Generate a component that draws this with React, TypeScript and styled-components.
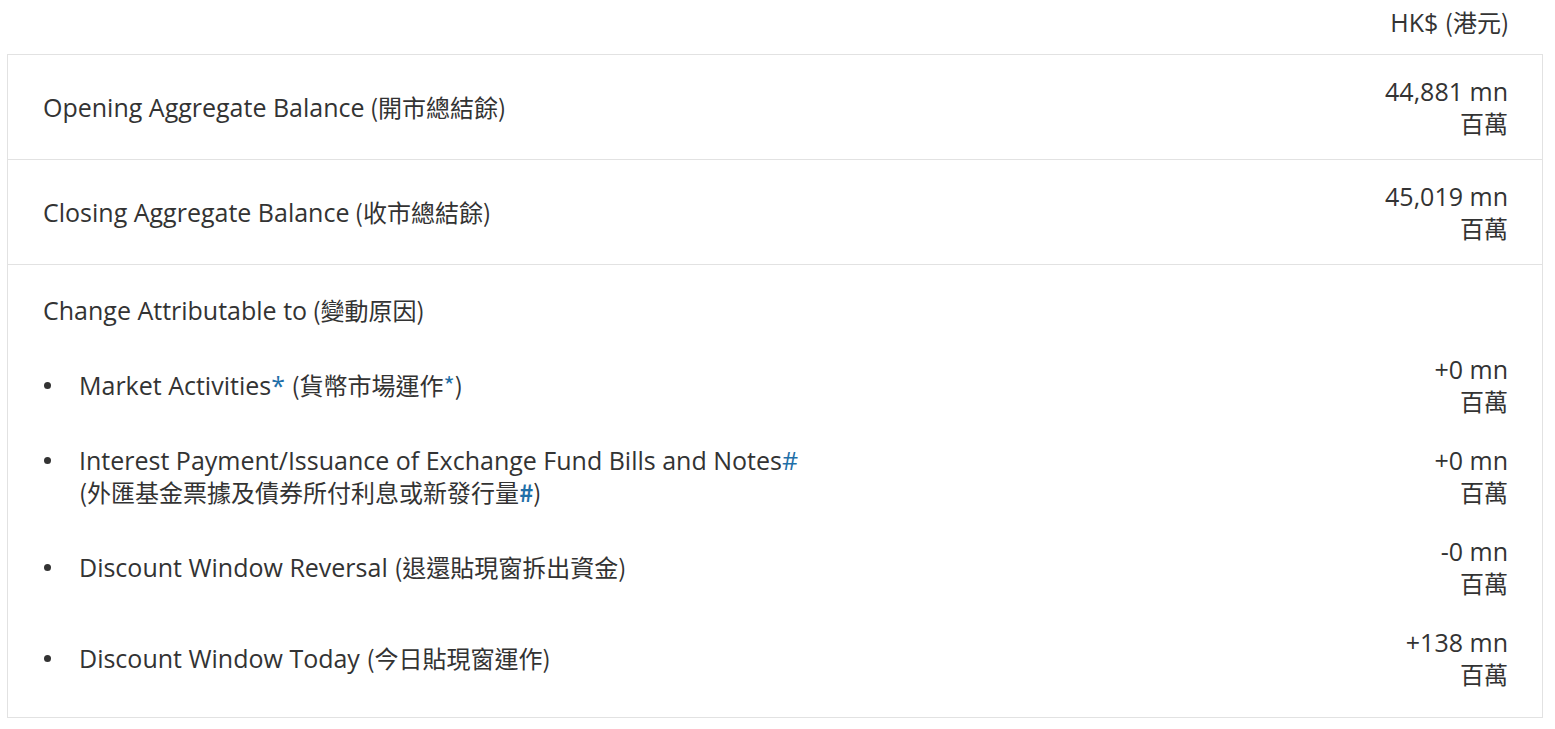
import React from 'react';
import styled, { createGlobalStyle } from 'styled-components';

const GlobalStyle = createGlobalStyle`
    body {
        margin: 0;
        background: #fff;
        font-family: "Open Sans", "Noto Sans CJK TC", sans-serif;
        color: #333;
    }
`;

const Page = styled.div`
    padding: 4px 12px 10px 7px;
    font-size: 25px;
    line-height: 32px;
`;

const Currency = styled.div`
    text-align: right;
    padding: 2px 34px 16px 0;
`;

const Zh = styled.span`
    font-family: "Noto Sans CJK TC", sans-serif;
    font-size: 24px;
`;

const Mark = styled.span<{ $bold?: boolean }>`
    color: #1f6fa8;
    font-weight: ${p => (p.$bold ? 700 : 400)};
`;

const Table = styled.div`
    border: 1px solid #e2e2e2;
`;

const Row = styled.div`
    display: flex;
    justify-content: space-between;
    align-items: center;
    padding: 20px 34px 20px 35px;
    border-bottom: 1px solid #e2e2e2;
`;

const Section = styled.div`
    padding: 29px 34px 27px 35px;
`;

const Label = styled.div`
    flex: 1;
    display: flex;
    align-items: flex-start;
`;

const Value = styled.div`
    display: flex;
    flex-direction: column;
    align-items: flex-end;
    text-align: right;
`;

const List = styled.div`
    display: flex;
    flex-direction: column;
    gap: 27px;
    margin-top: 27px;
`;

const ListItem = styled.div`
    display: flex;
    align-items: center;
`;

const Bullet = styled.span`
    flex: none;
    width: 36px;
    height: 32px;
    display: flex;
    align-items: center;
    padding-left: 1px;
    box-sizing: border-box;
    &::before {
        content: '';
        width: 7px;
        height: 7px;
        border-radius: 50%;
        background: #333;
    }
`;

type Item = { en: React.ReactNode; zh: React.ReactNode; value: string; wrap?: boolean };

const items: Item[] = [
    { en: <>Market Activities<Mark>*</Mark></>, zh: <>(貨幣市場運作<Mark>*</Mark>)</>, value: '+0' },
    { en: <>Interest Payment/Issuance of Exchange Fund Bills and Notes<Mark>#</Mark></>, zh: <>(外匯基金票據及債券所付利息或新發行量<Mark $bold>#</Mark>)</>, value: '+0', wrap: true },
    { en: 'Discount Window Reversal', zh: '(退還貼現窗拆出資金)', value: '-0' },
    { en: 'Discount Window Today', zh: '(今日貼現窗運作)', value: '+138' },
];

function Amount({ value }: { value: string }) {
    return (
        <Value>
            <span>{value} mn</span>
            <Zh>百萬</Zh>
        </Value>
    );
}

export default function App() {
    return (
        <Page>
            <GlobalStyle />
            <Currency>HK$ <Zh>(港元)</Zh></Currency>
            <Table>
                <Row>
                    <Label>Opening Aggregate Balance <Zh>&nbsp;(開市總結餘)</Zh></Label>
                    <Amount value="44,881" />
                </Row>
                <Row>
                    <Label>Closing Aggregate Balance <Zh>&nbsp;(收市總結餘)</Zh></Label>
                    <Amount value="45,019" />
                </Row>
                <Section>
                    <Label>Change Attributable to <Zh>&nbsp;(變動原因)</Zh></Label>
                    <List>
                        {items.map((it, i) => (
                            <ListItem key={i}>
                                <Label>
                                    <Bullet />
                                    <span>
                                        {it.en}{it.wrap ? <br /> : ' '}<Zh>{it.zh}</Zh>
                                    </span>
                                </Label>
                                <Amount value={it.value} />
                            </ListItem>
                        ))}
                    </List>
                </Section>
            </Table>
        </Page>
    );
}
